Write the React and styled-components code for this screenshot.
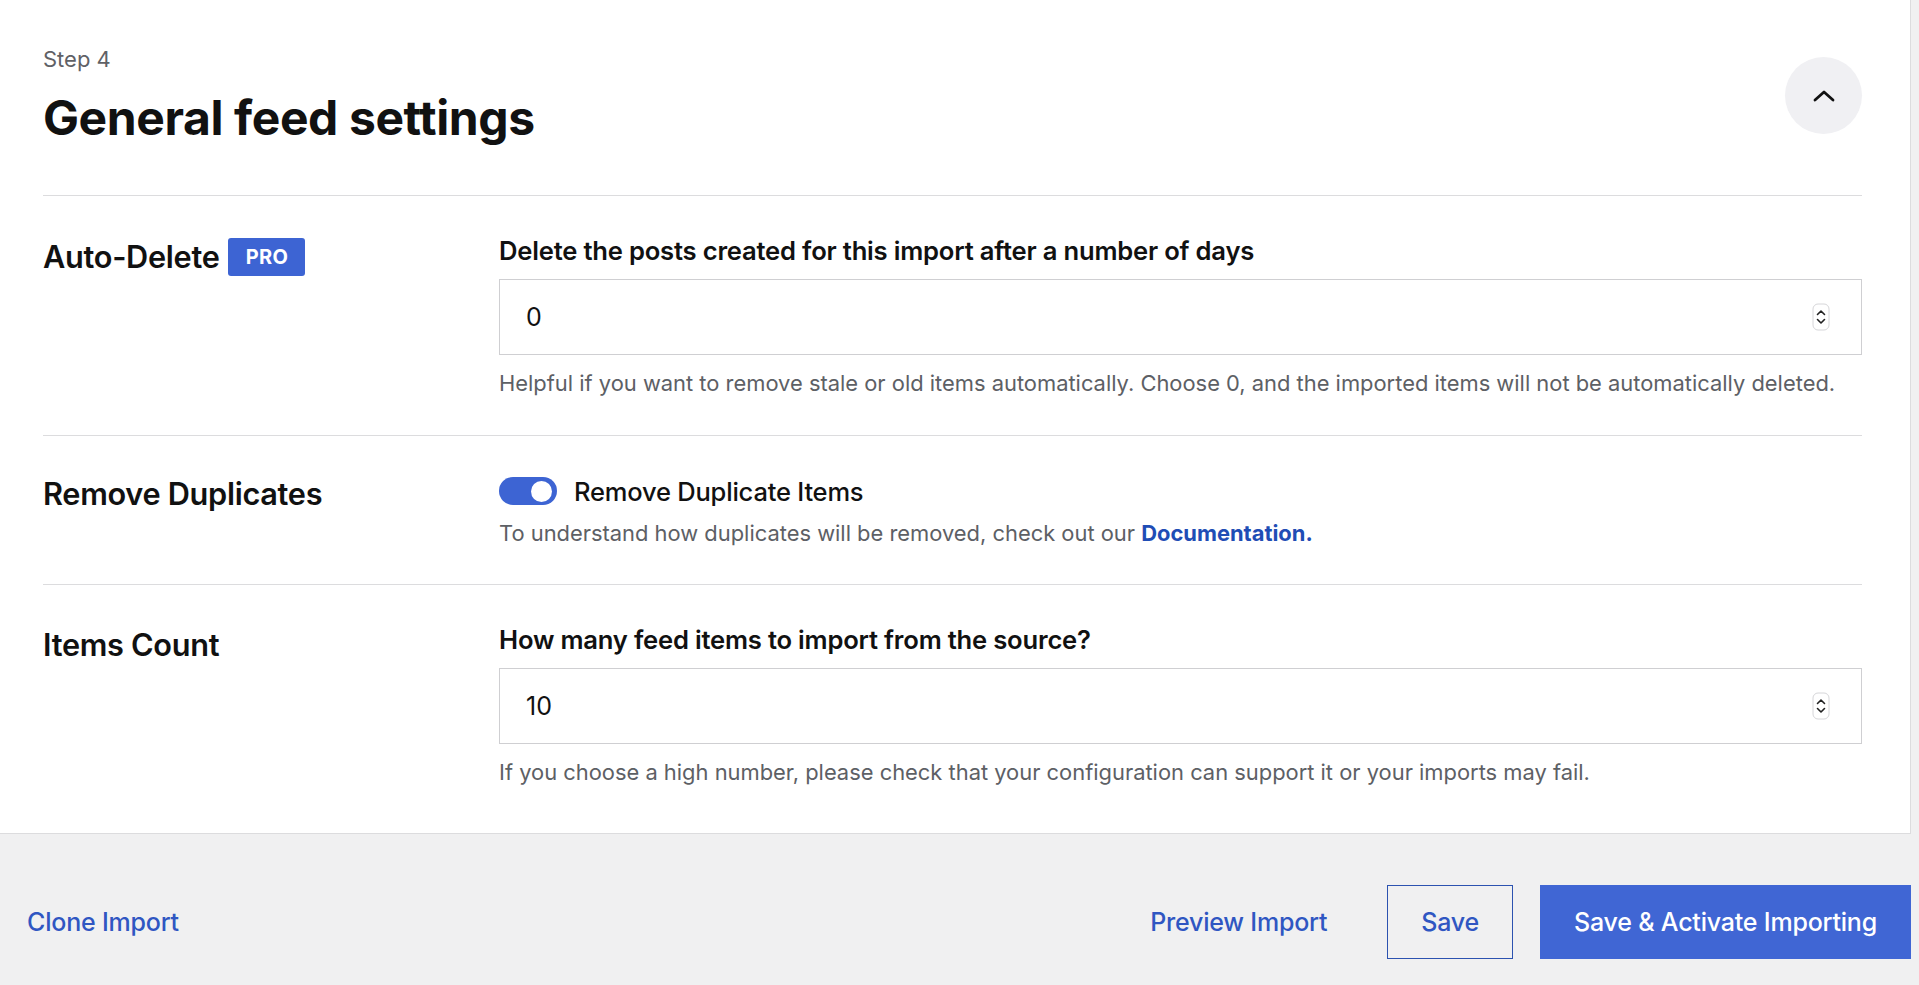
import React from 'react'
import styled, { createGlobalStyle } from 'styled-components'

const GlobalStyle = createGlobalStyle`
* {
    box-sizing: border-box;
}
body {
    margin: 0;
    background: #f0f0f1;
    font-family: Inter, "Noto Sans", "Liberation Sans", sans-serif;
    color: #1e1e1e;
}
`

const Page = styled.div`
width: 100%;
height: 985px;
display: flex;
flex-direction: column;
overflow: hidden;
`

const Card = styled.div`
width: calc(100% - 8px);
background: #fff;
border-right: 1px solid #dcdcde;
border-bottom: 1px solid #dcdcde;
padding: 0 48px 0 43px;
`

const Header = styled.div`
display: flex;
align-items: center;
justify-content: space-between;
padding: 46px 0 51px;
border-bottom: 1px solid #dcdcde;
`

const Step = styled.div`
font-size: 22px;
line-height: 26px;
color: #5f6166;
margin-bottom: 20px;
`

const Title = styled.h1`
margin: 0;
font-size: 48px;
line-height: 52px;
font-weight: 700;
letter-spacing: -0.4px;
color: #111;
`

const CollapseButton = styled.button`
width: 77px;
height: 77px;
border-radius: 50%;
border: none;
background: #f0f0f3;
display: flex;
align-items: center;
justify-content: center;
cursor: pointer;
padding: 0;
`

const Row = styled.div`
display: grid;
grid-template-columns: 456px 1fr;
padding: ${p => p.$top}px 0 ${p => p.$bottom}px;
border-bottom: ${p => (p.$last ? 'none' : '1px solid #dcdcde')};
`

const RowLabel = styled.div`
display: flex;
align-items: center;
gap: 9px;
font-size: 30.7px;
line-height: 38px;
font-weight: 600;
letter-spacing: -0.3px;
color: #111;
margin-top: ${p => p.$offset || 0}px;
align-self: start;
`

const ProBadge = styled.span`
display: inline-flex;
align-items: center;
justify-content: center;
width: 77px;
height: 38px;
border-radius: 3px;
background: #3d64d3;
color: #fff;
font-size: 20px;
font-weight: 700;
letter-spacing: 0.3px;
`

const FieldLabel = styled.div`
font-size: 25.6px;
line-height: 30px;
font-weight: 600;
letter-spacing: -0.2px;
color: #111;
margin-bottom: 13px;
`

const NumberBox = styled.div`
height: 76px;
border: 1px solid #cfcfd2;
display: flex;
align-items: center;
justify-content: space-between;
padding: 0 31px 0 22px;
font-size: 25px;
color: #111;
`

const NumberValue = styled.input`
border: none;
outline: none;
background: transparent;
font: inherit;
color: inherit;
width: 200px;
padding: 0 0 0 4px;
`

const Help = styled.div`
margin-top: 14px;
font-size: 21.9px;
line-height: 28px;
color: #5d6065;
`

const HelpLink = styled.a`
color: #1f4db5;
font-weight: 700;
text-decoration: none;
`

const ToggleRow = styled.div`
display: flex;
align-items: center;
gap: 17px;
height: 28px;
`

const Toggle = styled.span`
width: 58px;
height: 28px;
border-radius: 14px;
background: #3d64d3;
display: flex;
align-items: center;
justify-content: flex-end;
padding-right: 5px;
`

const Knob = styled.span`
width: 21px;
height: 21px;
border-radius: 50%;
background: #fff;
`

const ToggleText = styled.span`
font-size: 25.5px;
font-weight: 500;
letter-spacing: -0.2px;
color: #111;
`

const Footer = styled.div`
flex: 1;
display: flex;
align-items: center;
justify-content: space-between;
padding: 24px 8px 0 27px;
`

const LinkButton = styled.a`
font-size: 25px;
font-weight: 500;
letter-spacing: -0.2px;
color: #2f56c2;
text-decoration: none;
cursor: pointer;
`

const Actions = styled.div`
display: flex;
align-items: center;
`

const OutlineButton = styled.button`
height: 74px;
padding: 0 33px;
margin: 0 27px 0 60px;
background: transparent;
border: 1.5px solid #2c52b0;
color: #2f56c2;
font-family: inherit;
font-size: 25px;
font-weight: 500;
letter-spacing: -0.2px;
cursor: pointer;
`

const PrimaryButton = styled.button`
height: 74px;
padding: 0 34px;
background: #4066d4;
border: none;
color: #fff;
font-family: inherit;
font-size: 25px;
font-weight: 500;
letter-spacing: -0.2px;
cursor: pointer;
`

const Spinner = () => (
    <svg width="18" height="28" viewBox="0 0 18 28" fill="none">
        <rect x="1" y="1" width="16" height="26" rx="5" stroke="#d6d6d9" />
        <path d="M5.5 11.5 L9 8 L12.5 11.5" stroke="#222" strokeWidth="1.6" strokeLinecap="round" strokeLinejoin="round" />
        <path d="M5.5 16.5 L9 20 L12.5 16.5" stroke="#222" strokeWidth="1.6" strokeLinecap="round" strokeLinejoin="round" />
    </svg>
)

const ChevronUp = () => (
    <svg width="22" height="13" viewBox="0 0 22 13" fill="none">
        <path d="M2 11 L11 3 L20 11" stroke="#111" strokeWidth="2.8" strokeLinecap="round" strokeLinejoin="round" />
    </svg>
)

const App = () => {
    return (
        <Page>
            <GlobalStyle />
            <Card>
                <Header>
                    <div>
                        <Step>Step 4</Step>
                        <Title>General feed settings</Title>
                    </div>
                    <CollapseButton aria-label="Collapse">
                        <ChevronUp />
                    </CollapseButton>
                </Header>

                <Row $top={40} $bottom={38}>
                    <RowLabel $offset={2}>
                        Auto-Delete <ProBadge>PRO</ProBadge>
                    </RowLabel>
                    <div>
                        <FieldLabel>Delete the posts created for this import after a number of days</FieldLabel>
                        <NumberBox>
                            <NumberValue defaultValue="0" />
                            <Spinner />
                        </NumberBox>
                        <Help>Helpful if you want to remove stale or old items automatically. Choose 0, and the imported items will not be automatically deleted.</Help>
                    </div>
                </Row>

                <Row $top={41} $bottom={37}>
                    <RowLabel $offset={-2}>Remove Duplicates</RowLabel>
                    <div>
                        <ToggleRow>
                            <Toggle><Knob /></Toggle>
                            <ToggleText>Remove Duplicate Items</ToggleText>
                        </ToggleRow>
                        <Help>
                            To understand how duplicates will be removed, check out our <HelpLink href="#">Documentation.</HelpLink>
                        </Help>
                    </div>
                </Row>

                <Row $top={40} $bottom={47} $last>
                    <RowLabel $offset={1}>Items Count</RowLabel>
                    <div>
                        <FieldLabel>How many feed items to import from the source?</FieldLabel>
                        <NumberBox>
                            <NumberValue defaultValue="10" />
                            <Spinner />
                        </NumberBox>
                        <Help>If you choose a high number, please check that your configuration can support it or your imports may fail.</Help>
                    </div>
                </Row>
            </Card>

            <Footer>
                <LinkButton>Clone Import</LinkButton>
                <Actions>
                    <LinkButton>Preview Import</LinkButton>
                    <OutlineButton>Save</OutlineButton>
                    <PrimaryButton>Save &amp; Activate Importing</PrimaryButton>
                </Actions>
            </Footer>
        </Page>
    )
}

export default App
